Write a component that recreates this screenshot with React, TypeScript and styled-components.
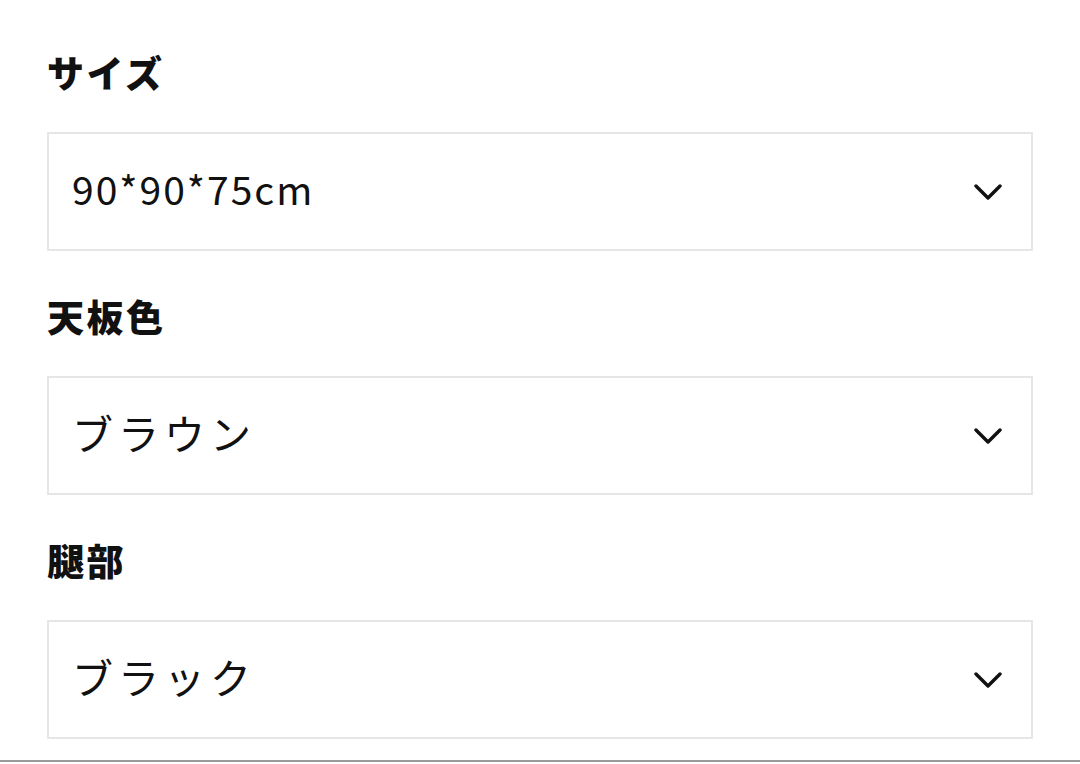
import React from 'react';
import styled, { createGlobalStyle } from 'styled-components';

const GlobalStyle = createGlobalStyle`
  html, body {
    margin: 0;
    padding: 0;
    background: #ffffff;
  }
  body {
    font-family: "Noto Sans CJK JP", "Noto Sans", sans-serif;
    color: #111;
  }
`;

const options = [
  { label: 'サイズ', value: '90*90*75cm' },
  { label: '天板色', value: 'ブラウン' },
  { label: '腿部', value: 'ブラック' },
];

const Page = styled.div`
  height: 762px;
  border-bottom: 2px solid #9a9a9a;
  padding: 48px 47px 0;
  box-sizing: border-box;
  display: flex;
  flex-direction: column;
  gap: 41px;
`;

const Field = styled.div`
  display: flex;
  flex-direction: column;
  gap: 36px;
`;

const Label = styled.div`
  font-size: 37px;
  line-height: 48px;
  font-weight: 900;
  letter-spacing: 2.5px;
  color: #111;
`;

const Select = styled.div`
  height: 119px;
  box-sizing: border-box;
  border: 2px solid #e6e6e6;
  display: flex;
  align-items: center;
  justify-content: space-between;
  padding: 0 29px 0 23px;
`;

const Value = styled.span<{ $kana: boolean }>`
  font-size: ${(p) => (p.$kana ? '41px' : '39px')};
  letter-spacing: ${(p) => (p.$kana ? '5px' : '2px')};
  line-height: 1;
  margin-bottom: 7px;
  color: #111;
`;

const Chevron = () => (
  <svg width="28" height="18" viewBox="0 0 28 18" fill="none">
    <polyline
      points="2,3 14,15 26,3"
      stroke="#111"
      strokeWidth="3.4"
      strokeLinecap="round"
      strokeLinejoin="round"
    />
  </svg>
);

const App = () => (
  <>
    <GlobalStyle />
    <Page>
      {options.map((o) => (
        <Field key={o.label}>
          <Label>{o.label}</Label>
          <Select>
            <Value $kana={!/^[0-9]/.test(o.value)}>{o.value}</Value>
            <Chevron />
          </Select>
        </Field>
      ))}
    </Page>
  </>
);

export default App;
